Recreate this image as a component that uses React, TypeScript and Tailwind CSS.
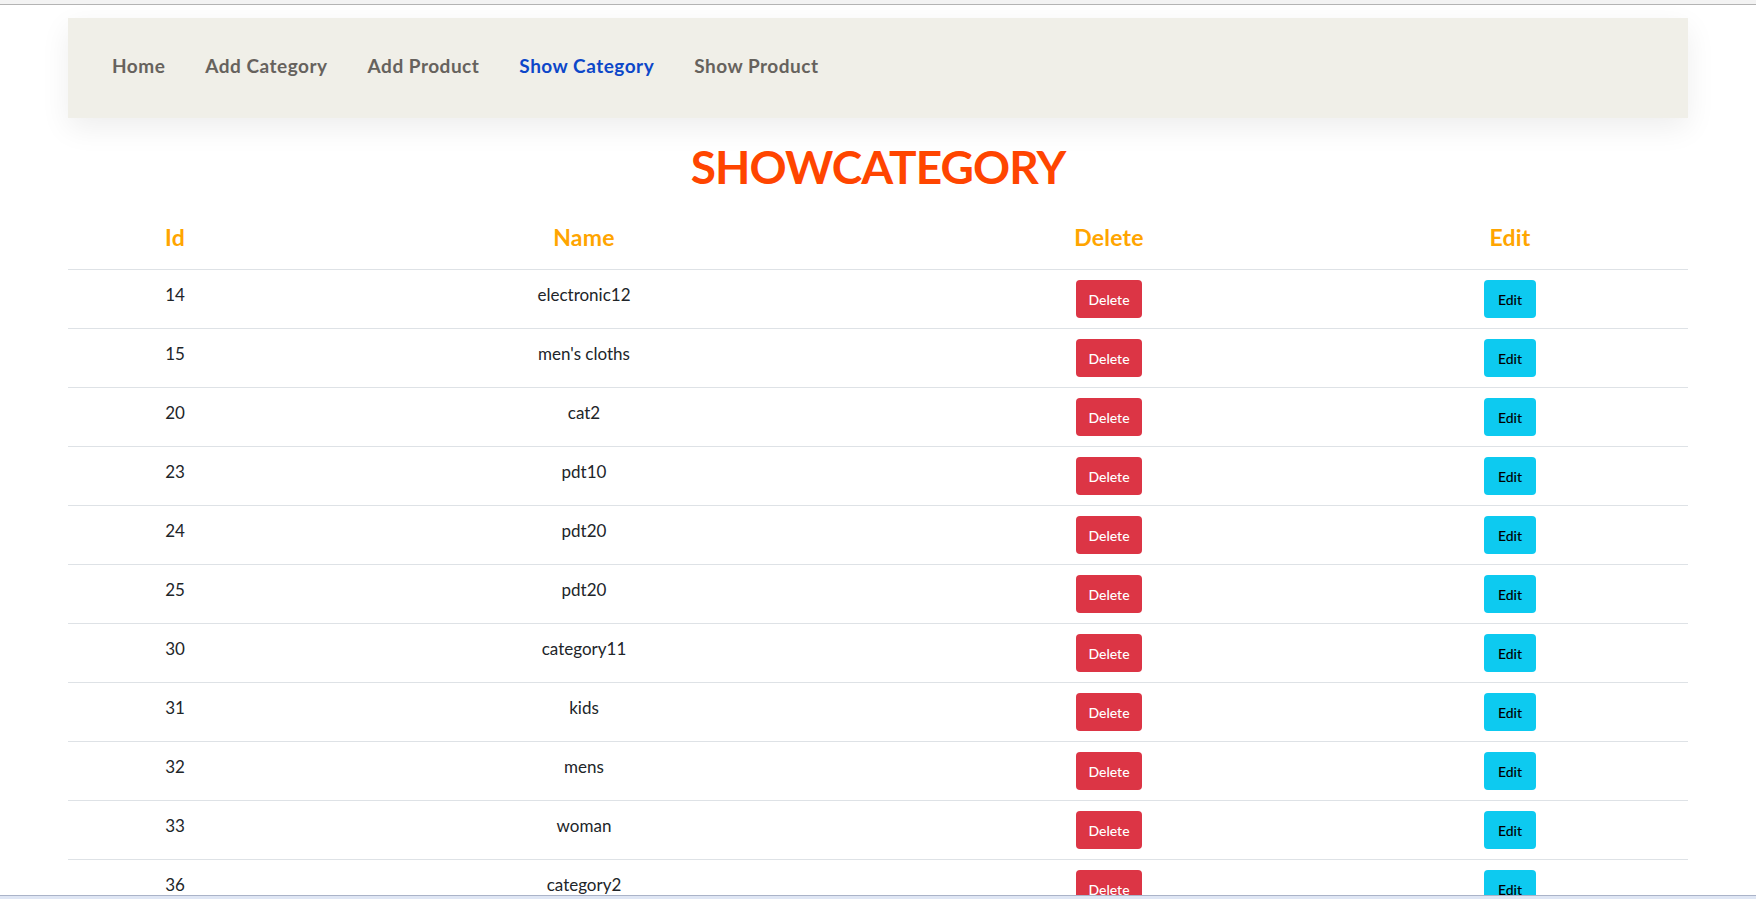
const navLinks = [
  { label: 'Home', active: false },
  { label: 'Add Category', active: false },
  { label: 'Add Product', active: false },
  { label: 'Show Category', active: true },
  { label: 'Show Product', active: false },
];

const categories = [
  { id: 14, name: 'electronic12' },
  { id: 15, name: "men's cloths" },
  { id: 20, name: 'cat2' },
  { id: 23, name: 'pdt10' },
  { id: 24, name: 'pdt20' },
  { id: 25, name: 'pdt20' },
  { id: 30, name: 'category11' },
  { id: 31, name: 'kids' },
  { id: 32, name: 'mens' },
  { id: 33, name: 'woman' },
  { id: 36, name: 'category2' },
];

export default function App() {
  return (
    <div className="min-h-screen bg-white font-['Lato',sans-serif]">
      {/* browser strip at the top */}
      <div className="h-[5px] bg-[#f3f3f3] border-b border-[#b4b4b4]"></div>

      {/* Navbar */}
      <nav className="mx-[68px] mt-[13px] h-[100px] bg-[#f0efe8] shadow-[0_10px_28px_rgba(0,0,0,0.07)] flex items-center pl-[44px] pb-[4px] gap-[40px]">
        {navLinks.map((link) => (
          <a
            key={link.label}
            href="#"
            className={`text-[19px] font-bold tracking-[0.5px] ${link.active ? 'text-[#0d47c9]' : 'text-[#66625d]'}`}
          >
            {link.label}
          </a>
        ))}
      </nav>

      <h1 className="mt-[26px] text-center text-[46px] leading-none font-bold text-[#ff4500] tracking-[-0.02em]">
        SHOWCATEGORY
      </h1>

      {/* Table */}
      <div className="mx-[68px] mt-[16px]">
        <div className="grid grid-cols-[214px_604px_446px_356px] border-b border-[#dee2e6] h-[64px] items-center text-[23px] font-bold tracking-[0.01em] text-[#ffa500] text-center">
          <div>Id</div>
          <div>Name</div>
          <div>Delete</div>
          <div>Edit</div>
        </div>

        {categories.map((cat) => (
          <div
            key={cat.id}
            className="grid grid-cols-[214px_604px_446px_356px] border-b border-[#dee2e6] h-[59px] text-center"
          >
            <div className="pt-[12px] text-[17px] leading-[26px] text-[#212529]">{cat.id}</div>
            <div className="pt-[12px] text-[17px] leading-[26px] text-[#212529]">{cat.name}</div>
            <div className="pt-[10px]">
              <button className="h-[38px] px-[12px] rounded-[4px] bg-[#dc3545] text-white text-[14px] font-medium">
                Delete
              </button>
            </div>
            <div className="pt-[10px]">
              <button className="h-[38px] px-[14px] rounded-[4px] bg-[#0dcaf0] text-black text-[14px] font-medium">
                Edit
              </button>
            </div>
          </div>
        ))}
      </div>

      {/* bottom strip */}
      <div className="fixed bottom-0 left-0 right-0 h-[4px] bg-[#dfe6f4] border-t border-[#aab3c8]"></div>
    </div>
  );
}
